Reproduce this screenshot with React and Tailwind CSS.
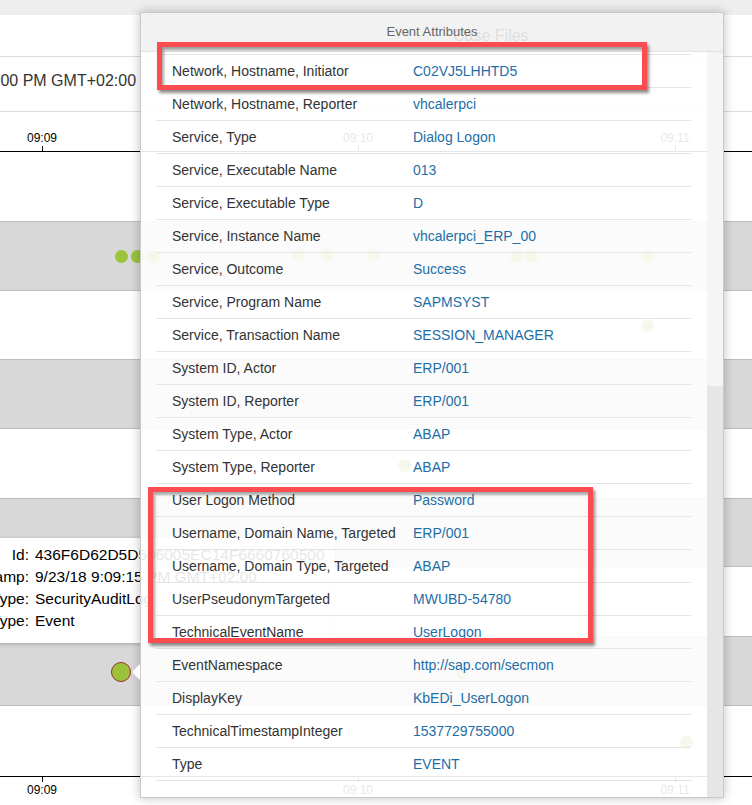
import React from 'react';

const rows = [
  ['Network, Hostname, Initiator', 'C02VJ5LHHTD5'],
  ['Network, Hostname, Reporter', 'vhcalerpci'],
  ['Service, Type', 'Dialog Logon'],
  ['Service, Executable Name', '013'],
  ['Service, Executable Type', 'D'],
  ['Service, Instance Name', 'vhcalerpci_ERP_00'],
  ['Service, Outcome', 'Success'],
  ['Service, Program Name', 'SAPMSYST'],
  ['Service, Transaction Name', 'SESSION_MANAGER'],
  ['System ID, Actor', 'ERP/001'],
  ['System ID, Reporter', 'ERP/001'],
  ['System Type, Actor', 'ABAP'],
  ['System Type, Reporter', 'ABAP'],
  ['User Logon Method', 'Password'],
  ['Username, Domain Name, Targeted', 'ERP/001'],
  ['Username, Domain Type, Targeted', 'ABAP'],
  ['UserPseudonymTargeted', 'MWUBD-54780'],
  ['TechnicalEventName', 'UserLogon'],
  ['EventNamespace', 'http://sap.com/secmon'],
  ['DisplayKey', 'KbEDi_UserLogon'],
  ['TechnicalTimestampInteger', '1537729755000'],
  ['Type', 'EVENT'],
];

const tooltip = [
  ['Id:', '436F6D62D5D506005EC14F6660760500'],
  ['Timestamp:', '9/23/18 9:09:15 PM GMT+02:00'],
  ['Log Type:', 'SecurityAuditLog'],
  ['Type:', 'Event'],
];

// swim lanes of the timeline, top to bottom
const lanes = [
  { h: 69, gray: false },
  { h: 70, gray: true },
  { h: 68, gray: false },
  { h: 70, gray: true },
  { h: 69, gray: false },
  { h: 69, gray: true },
  { h: 69, gray: false },
  { h: 70, gray: true },
  { h: 70, gray: false },
];

// event points (x, y centre) on the timeline
const dots = [
  [121, 256], [137, 256], [153, 256], [298, 255], [326, 255], [373, 255],
  [516, 256], [531, 256], [647, 256], [647, 325], [404, 465], [462, 673], [686, 742],
];

const ticks = [
  { x: 42, label: '09:09' },
  { x: 358, label: '09:10' },
  { x: 675, label: '09:11' },
];

function Axis({ bottom }) {
  return (
    <svg width="752" height={bottom ? 29 : 40} className="block">
      {bottom ? (
        <line x1="0" x2="752" y1="0.5" y2="0.5" stroke="#000" />
      ) : (
        <line x1="0" x2="752" y1="39.5" y2="39.5" stroke="#000" />
      )}
      {ticks.map((t) => (
        <g key={t.label}>
          <line
            x1={t.x + 0.5}
            x2={t.x + 0.5}
            y1={bottom ? 0 : 34}
            y2={bottom ? 6 : 40}
            stroke="#000"
          />
          <text
            x={t.x}
            y={bottom ? 18 : 30}
            textAnchor="middle"
            fontSize="12"
            fontFamily="'Liberation Sans', Arial, sans-serif"
            fill="#000"
          >
            {t.label}
          </text>
        </g>
      ))}
    </svg>
  );
}

export default function App() {
  return (
    <div className="relative w-[752px] h-[805px] overflow-hidden bg-white font-['Liberation_Sans',Arial,sans-serif]">
      {/* page behind the popup */}
      <div className="h-[15px] bg-[#eeeeee]" />
      <div className="h-[42px] border-b border-[#dcdcdc] flex items-center">
        <span className="ml-[453px] text-[16px] text-[#333]">Case Files</span>
      </div>
      <div className="h-[55px] border-b border-[#dcdcdc] pt-[14px] overflow-hidden whitespace-nowrap">
        <span className="block ml-[-93px] text-[16px] leading-[20px] text-[#333]">
          9/23/18 9:09:00 PM GMT+02:00
        </span>
      </div>
      <Axis />
      <div>
        {lanes.map((l, i) => (
          <div
            key={i}
            style={{ height: l.h }}
            className={l.gray ? 'bg-[#d8d8d8] border-y border-[#bdbdbd]' : 'bg-white'}
          />
        ))}
      </div>
      <Axis bottom />

      {dots.map(([x, y], i) => (
        <div
          key={i}
          style={{ left: x - 6.5, top: y - 6.5 }}
          className="absolute w-[13px] h-[13px] rounded-full bg-[#9bc43a]"
        />
      ))}
      <div className="absolute left-[111px] top-[662px] w-[20px] h-[20px] rounded-full bg-[#9bc23b] border border-[#a12d2a]" />

      {/* hover tooltip, mostly hidden under the popup */}
      <div className="absolute left-[-120px] top-[538px] w-[455px] h-[105px] bg-white shadow-[0_1px_4px_rgba(0,0,0,0.25)] pt-[6px] text-[15.5px] leading-[22px] text-black whitespace-nowrap">
        {tooltip.map(([k, v]) => (
          <div key={k} className="flex gap-[6px]">
            <span className="w-[149px] shrink-0 text-right">{k}</span>
            <span>{v}</span>
          </div>
        ))}
      </div>

      {/* Event Attributes popup */}
      <div className="absolute left-[140px] top-[12px] w-[584px] h-[786px] border border-[#c9c9c9] shadow-[0_0_10px_rgba(0,0,0,0.25)] flex flex-col">
        <div className="absolute left-[-9px] top-[651px] w-0 h-0 border-y-[8px] border-y-transparent border-r-[8px] border-r-white" />
        <div className="h-[39px] shrink-0 border-b border-[#e2e2e2] bg-[#f1f1f1]/90 flex items-center justify-center text-[13px] text-[#666]">
          Event Attributes
        </div>
        <div className="flex flex-1 min-h-0 bg-white/90">
          <div className="flex-1 pl-[15px] pr-[16px] pt-[2px]">
            <ul className="border-t border-[#e4e4e4]">
              {rows.map(([label, value]) => (
                <li key={label} className="h-[33px] border-b border-[#e4e4e4] flex items-center pl-4 text-[14px]">
                  <span className="w-[241px] shrink-0 text-[#333]">{label}</span>
                  <span className="text-[#1d6ea7]">{value}</span>
                </li>
              ))}
            </ul>
          </div>
          <div className="relative w-[16px] shrink-0 bg-[#f5f5f5]">
            <div className="absolute left-0 right-0 top-[334px] bottom-0 bg-[#e6e6e6]" />
          </div>
        </div>
      </div>

      {/* annotation boxes */}
      <div className="absolute left-[157px] top-[42px] w-[490px] h-[48px] border-[5px] border-[#fd4c50] shadow-[2px_3px_3px_rgba(0,0,0,0.45),inset_2px_3px_3px_rgba(0,0,0,0.35)]" />
      <div className="absolute left-[148px] top-[487px] w-[445px] h-[156px] border-[5px] border-[#fd4c50] shadow-[2px_3px_3px_rgba(0,0,0,0.45),inset_2px_3px_3px_rgba(0,0,0,0.35)]" />
    </div>
  );
}
